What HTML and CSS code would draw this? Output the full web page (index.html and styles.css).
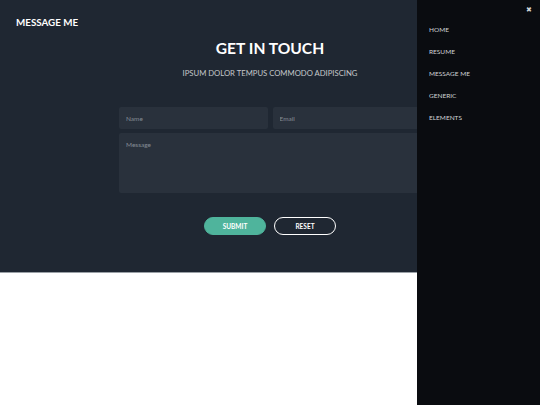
FILE: index.html
```html
<!DOCTYPE html>
<html lang="en">
<head>
    <meta charset="UTF-8">
    <meta name="viewport" content="width=device-width, initial-scale=1.0">
    <title>Message Me</title>
    <link rel="stylesheet" href="styles.css">
</head>
<body>
    <section class="contact">
        <header class="topbar">
            <a class="logo" href="#">MESSAGE ME</a>
        </header>
        <div class="inner">
            <h2>GET IN TOUCH</h2>
            <p class="lead">IPSUM DOLOR TEMPUS COMMODO ADIPISCING</p>
            <form class="form">
                <div class="row">
                    <input type="text" placeholder="Name">
                    <input type="email" placeholder="Email">
                </div>
                <textarea placeholder="Message"></textarea>
                <div class="actions">
                    <button type="submit" class="btn primary">SUBMIT</button>
                    <button type="reset" class="btn">RESET</button>
                </div>
            </form>
        </div>
    </section>

    <nav class="menu">
        <a class="close" href="#">&#10006;</a>
        <ul>
            <li><a href="#">HOME</a></li>
            <li><a href="#">RESUME</a></li>
            <li><a href="#">MESSAGE ME</a></li>
            <li><a href="#">GENERIC</a></li>
            <li><a href="#">ELEMENTS</a></li>
        </ul>
    </nav>
</body>
</html>
```

FILE: styles.css
```css
body {
    margin: 0;
    padding: 0;
    background: #fff;
    font-family: 'Lato', 'Liberation Sans', sans-serif;
}

.contact {
    height: 273px;
    background: #1f2732;
    border-bottom: 1px solid #9aa0a6;
    box-sizing: border-box;
    color: #fff;
}

.topbar {
    padding: 14px 16px 0;
    height: 20px;
    line-height: 12px;
}

.logo {
    color: #fff;
    text-decoration: none;
    font-weight: 700;
    font-size: 9.8px;
}

.inner {
    width: 302px;
    margin: 0 auto;
    text-align: center;
}

h2 {
    margin: 4px 0 0;
    font-size: 15.6px;
    font-weight: 700;
    line-height: 20px;
}

.lead {
    margin: 9px 0 0;
    font-size: 7.7px;
    color: #c4c7cb;
    line-height: 12px;
}

.form {
    margin-top: 28px;
}

.row {
    display: flex;
    gap: 5px;
    margin-bottom: 4px;
}

input, textarea {
    display: block;
    flex: 1;
    min-width: 0;
    height: 22px;
    padding: 0 7px;
    border: none;
    border-radius: 2px;
    background: #29313c;
    color: #fff;
    font-family: inherit;
    font-size: 6.5px;
    outline: none;
    box-sizing: border-box;
}

textarea {
    width: 100%;
    height: 60px;
    padding-top: 8px;
    resize: none;
}

::placeholder {
    color: #858c95;
}

.actions {
    display: flex;
    justify-content: center;
    gap: 8px;
    margin-top: 24px;
}

.btn {
    width: 62px;
    height: 18px;
    border-radius: 9px;
    border: 1px solid #fff;
    background: transparent;
    color: #fff;
    font-family: inherit;
    font-weight: 700;
    font-size: 6.5px;
    cursor: pointer;
}

.btn.primary {
    background: #4fb49c;
    border-color: #4fb49c;
}

.menu {
    position: fixed;
    top: 0;
    right: 0;
    width: 123px;
    height: 100%;
    background: #0a0c10;
}

.close {
    position: absolute;
    top: 6px;
    right: 8px;
    color: #d0d0d0;
    font-size: 7px;
    text-decoration: none;
}

.menu ul {
    list-style: none;
    margin: 0;
    padding: 16px 0 0 12px;
}

.menu li {
    height: 22px;
}

.menu a {
    color: #d0d3d6;
    text-decoration: none;
    font-size: 6.5px;
}
```
